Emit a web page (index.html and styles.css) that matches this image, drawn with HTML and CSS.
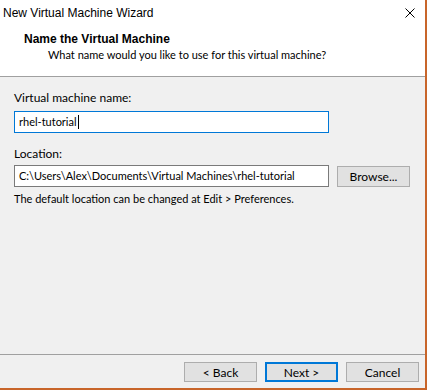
FILE: index.html
```html
<!DOCTYPE html>
<html lang="en">
<head>
    <meta charset="UTF-8">
    <meta name="viewport" content="width=device-width, initial-scale=1.0">
    <title>New Virtual Machine Wizard</title>
    <link rel="stylesheet" href="styles.css">
</head>
<body>

    <div class="window">
        <div class="top">
            <div class="titlebar">
                <span class="title">New Virtual Machine Wizard</span>
                <svg class="close" width="10" height="10" viewBox="0 0 10 10">
                    <path d="M0.5 0.5 L9.5 9.5 M9.5 0.5 L0.5 9.5" stroke="#000" stroke-width="1" fill="none" />
                </svg>
            </div>
            <div class="header">
                <div class="header-title">Name the Virtual Machine</div>
                <div class="header-sub">What name would you like to use for this virtual machine?</div>
            </div>
        </div>

        <div class="content">
            <div class="label">Virtual machine name:</div>
            <div class="field active">rhel-tutorial<span class="caret"></span></div>

            <div class="label location">Location:</div>
            <div class="row">
                <div class="field">C:\Users\Alex\Documents\Virtual Machines\rhel-tutorial</div>
                <button class="btn browse">Browse...</button>
            </div>
            <div class="hint">The default location can be changed at Edit &gt; Preferences.</div>
        </div>

        <div class="footer">
            <button class="btn">&lt; Back</button>
            <button class="btn default">Next &gt;</button>
            <button class="btn">Cancel</button>
        </div>
    </div>

</body>
</html>
```

FILE: styles.css
```css
body {
    margin: 0;
    font-family: Lato, "Liberation Sans", sans-serif;
    font-size: 12px;
    line-height: 14px;
    color: #000;
}

.window {
    width: 427px;
    height: 390px;
    box-sizing: border-box;
    background-color: #f0f0f0;
    border-right: 2px solid #c8652a;
    border-bottom: 2px solid #c8652a;
    display: flex;
    flex-direction: column;
}

/* white title + header block */
.top {
    height: 76px;
    background-color: #fff;
    border-bottom: 1px solid #a0a0a0;
}

.titlebar {
    height: 32px;
    display: flex;
    justify-content: space-between;
    align-items: flex-start;
    padding: 6px 10px 0 3px;
    box-sizing: border-box;
}

.title {
    font-family: "Liberation Sans", sans-serif;
}

.close {
    margin-top: 2px;
}

.header-title {
    font-family: "Liberation Sans", sans-serif;
    font-weight: bold;
    padding-left: 24px;
}

.header-sub {
    margin-top: 2px;
    padding-left: 48px;
    font-size: 11px;
}

/* form area */
.content {
    flex: 1;
    padding: 14px 0 0 14px;
}

.label.location {
    margin-top: 14px;
}

.field {
    width: 315px;
    height: 22px;
    box-sizing: border-box;
    border: 1px solid #7a7a7a;
    background-color: #fff;
    padding: 0 4px;
    font-size: 11px;
    line-height: 20px;
    white-space: nowrap;
    display: flex;
    align-items: center;
}

.content > .field {
    margin-top: 6px;
}

.field.active {
    border-color: #0078d7;
}

.caret {
    display: inline-block;
    width: 1px;
    height: 14px;
    margin-left: 1px;
    background-color: #000;
}

.row {
    display: flex;
    align-items: flex-start;
    margin-top: 4px;
}

.hint {
    margin-top: 5px;
    font-size: 11px;
}

/* buttons */
.btn {
    width: 73px;
    height: 20px;
    box-sizing: border-box;
    padding: 0;
    font-family: inherit;
    font-size: 12px;
    color: #000;
    background-color: #e1e1e1;
    border: 1px solid #adadad;
}

.btn.browse {
    height: 21px;
    margin: 1px 0 0 8px;
}

.btn.default {
    border: 2px solid #0078d7;
}

.footer {
    height: 34px;
    box-sizing: border-box;
    border-top: 1px solid #a0a0a0;
    display: flex;
    justify-content: flex-end;
    gap: 8px;
    padding: 7px 6px 0 0;
}
```
